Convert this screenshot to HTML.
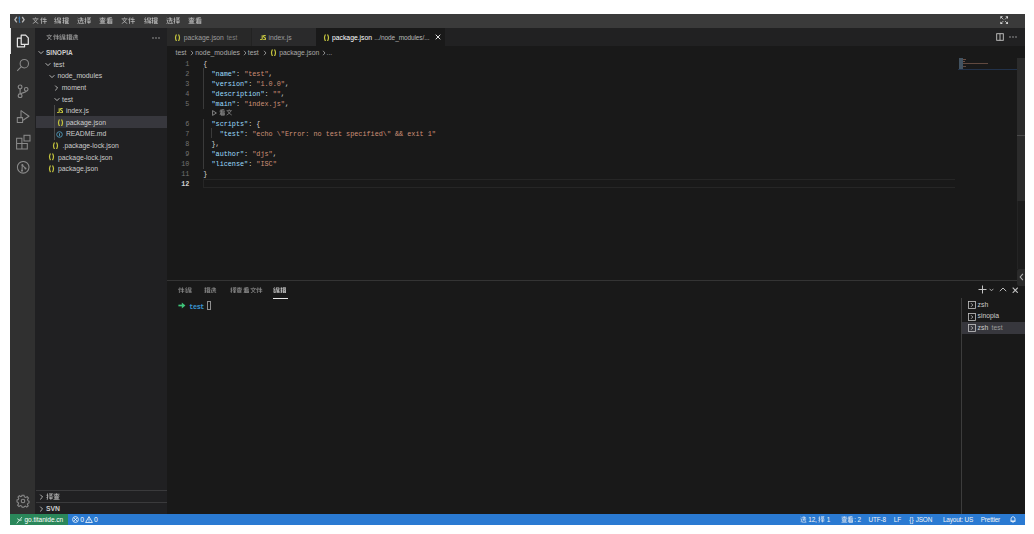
<!DOCTYPE html><html><head><meta charset="utf-8"><style>
*{margin:0;padding:0;box-sizing:border-box}
html,body{width:1034px;height:534px;background:#fff;overflow:hidden}
body{position:relative;font-family:"Liberation Sans",sans-serif;color:#cccccc;font-size:6.8px}
.a{position:absolute}
.t{position:absolute;white-space:nowrap;line-height:8px;height:8px}
.m{font-family:"Liberation Mono",monospace}
#title{left:10px;top:14px;width:1015px;height:14px;background:#3a3a3a}
#act{left:10px;top:28px;width:25.3px;height:486px;background:#303030}
#side{left:35.3px;top:28px;width:131.7px;height:486px;background:#202022}
#tabs{left:167px;top:28px;width:858px;height:18px;background:#212122}
#editor{left:167px;top:46px;width:858px;height:234px;background:#191919}
#panel{left:167px;top:280px;width:858px;height:234px;background:#191919}
#status{left:10px;top:513.6px;width:1015px;height:11.3px;background:#2a7ad2}
#remote{left:10px;top:513.6px;width:57.7px;height:11.3px;background:#2a875a}
svg.cj{display:inline-block;width:1.04em;height:1.04em;vertical-align:-0.16em;margin-right:0.02em;opacity:.9}
.ln{position:absolute;white-space:pre;line-height:10px;height:10px;font-family:"Liberation Mono",monospace;font-size:6.8px}
.k{color:#9cdcfe}.s{color:#ce9178}.p{color:#d4d4d4}
.num{position:absolute;width:24px;text-align:right;line-height:10px;font-family:"Liberation Mono",monospace;font-size:6.8px;color:#858585}
</style></head><body>
<div class="a" id="title"></div>
<div class="a" id="act"></div>
<div class="a" id="side"></div>
<div class="a" id="tabs"></div>
<div class="a" id="editor"></div>
<div class="a" id="panel"></div>
<div class="a" id="status"></div>
<div class="a" id="remote"></div>
<svg class="a" style="left:13.8px;top:16.2px" width="11" height="7.5" viewBox="0 0 11 7.5"><path d="M2.8 1L0.9 3.7L2.8 6.4M8.2 1L10.1 3.7L8.2 6.4" stroke="#b8b8b8" stroke-width="1.35" fill="none"/><path d="M5.4 0.6V5.6Q5.4 6.6 6.3 6.5M4.4 2.3H6.4" stroke="#3a78b0" stroke-width="1.1" fill="none"/></svg>
<div class="t" style="left:32.4px;top:16.6px;color:#cccccc"><svg class="cj" style="" viewBox="0 0 7 7"><path d="M3.5 0.4V1.4M0.6 1.8H6.4M1.8 2.2Q3 5 6.3 6.6M5.2 2.2Q4 5 0.7 6.6" stroke="currentColor" stroke-width="0.72" fill="none"/></svg><svg class="cj" style="" viewBox="0 0 7 7"><path d="M2 0.4L0.5 3.2M1.5 2V6.8M3.2 1L2.8 2.8M3 2.5H6.6M2.6 4.5H6.8M4.8 0.4V6.8" stroke="currentColor" stroke-width="0.72" fill="none"/></svg></div>
<div class="t" style="left:54.4px;top:16.6px;color:#cccccc"><svg class="cj" style="" viewBox="0 0 7 7"><path d="M1.6 0.4L0.6 2.4L2.2 2.6L0.5 4.6L2.4 4.4M0.5 6.2L2.4 5.6M3.2 1H6.6M3.5 1V3H6.4V1M3.2 3.5L3 6.6M4 4H6.5V6.6M4 5.2H6.5M5.2 4V6.6" stroke="currentColor" stroke-width="0.72" fill="none"/></svg><svg class="cj" style="" viewBox="0 0 7 7"><path d="M0.5 1.4H2.5M1.5 0.4V6.6M0.5 3.4H2.5M0.5 5.5L2.5 4.8M3.2 0.8H6.2V2H3.2ZM3 3H6.8M3.6 3V6.6M5.8 3V6.6M3.6 4.5H5.8M3.6 5.5H5.8M2.8 6.6H6.8" stroke="currentColor" stroke-width="0.72" fill="none"/></svg></div>
<div class="t" style="left:76.9px;top:16.6px;color:#cccccc"><svg class="cj" style="" viewBox="0 0 7 7"><path d="M0.6 0.8L1.4 1.6M0.5 3H1.5V5.5L0.5 6.5M1.5 6.2Q3 6.8 6.8 6.5M3.5 0.4L2.6 2M3 1.8H6.4M4.5 0.4V3.2M2.4 3.2H6.6M3.8 3.2Q3.7 5 2.6 5.8M5.2 3.2V5.2Q5.2 5.6 6.4 5.5" stroke="currentColor" stroke-width="0.72" fill="none"/></svg><svg class="cj" style="" viewBox="0 0 7 7"><path d="M0.4 2.2H2.4M1.5 0.4V6.2Q1.5 6.8 0.8 6.6M0.4 4.6L2.4 3.8M3 0.8H6.5L3 3.2M3.5 1.5L6.6 3.2M3 4.2H6.8M4.8 3.4V6.8M3.2 5.4H6.6" stroke="currentColor" stroke-width="0.72" fill="none"/></svg></div>
<div class="t" style="left:99px;top:16.6px;color:#cccccc"><svg class="cj" style="" viewBox="0 0 7 7"><path d="M0.5 1.2H6.5M3.5 0.3V3M3.2 1.5L0.6 3.2M3.8 1.5L6.4 3.2M1.8 3.4H5.2V5.6H1.8ZM1.8 4.5H5.2M0.5 6.6H6.5" stroke="currentColor" stroke-width="0.72" fill="none"/></svg><svg class="cj" style="" viewBox="0 0 7 7"><path d="M5.8 0.3L1.2 1.2M0.8 2H6.2M0.6 3H6.6M3.4 0.8L1 6.6M2.2 4H5.8V6.8H2.2ZM2.2 5H5.8M2.2 5.9H5.8" stroke="currentColor" stroke-width="0.72" fill="none"/></svg></div>
<div class="t" style="left:121.3px;top:16.6px;color:#cccccc"><svg class="cj" style="" viewBox="0 0 7 7"><path d="M3.5 0.4V1.4M0.6 1.8H6.4M1.8 2.2Q3 5 6.3 6.6M5.2 2.2Q4 5 0.7 6.6" stroke="currentColor" stroke-width="0.72" fill="none"/></svg><svg class="cj" style="" viewBox="0 0 7 7"><path d="M2 0.4L0.5 3.2M1.5 2V6.8M3.2 1L2.8 2.8M3 2.5H6.6M2.6 4.5H6.8M4.8 0.4V6.8" stroke="currentColor" stroke-width="0.72" fill="none"/></svg></div>
<div class="t" style="left:143.8px;top:16.6px;color:#cccccc"><svg class="cj" style="" viewBox="0 0 7 7"><path d="M1.6 0.4L0.6 2.4L2.2 2.6L0.5 4.6L2.4 4.4M0.5 6.2L2.4 5.6M3.2 1H6.6M3.5 1V3H6.4V1M3.2 3.5L3 6.6M4 4H6.5V6.6M4 5.2H6.5M5.2 4V6.6" stroke="currentColor" stroke-width="0.72" fill="none"/></svg><svg class="cj" style="" viewBox="0 0 7 7"><path d="M0.5 1.4H2.5M1.5 0.4V6.6M0.5 3.4H2.5M0.5 5.5L2.5 4.8M3.2 0.8H6.2V2H3.2ZM3 3H6.8M3.6 3V6.6M5.8 3V6.6M3.6 4.5H5.8M3.6 5.5H5.8M2.8 6.6H6.8" stroke="currentColor" stroke-width="0.72" fill="none"/></svg></div>
<div class="t" style="left:165.8px;top:16.6px;color:#cccccc"><svg class="cj" style="" viewBox="0 0 7 7"><path d="M0.6 0.8L1.4 1.6M0.5 3H1.5V5.5L0.5 6.5M1.5 6.2Q3 6.8 6.8 6.5M3.5 0.4L2.6 2M3 1.8H6.4M4.5 0.4V3.2M2.4 3.2H6.6M3.8 3.2Q3.7 5 2.6 5.8M5.2 3.2V5.2Q5.2 5.6 6.4 5.5" stroke="currentColor" stroke-width="0.72" fill="none"/></svg><svg class="cj" style="" viewBox="0 0 7 7"><path d="M0.4 2.2H2.4M1.5 0.4V6.2Q1.5 6.8 0.8 6.6M0.4 4.6L2.4 3.8M3 0.8H6.5L3 3.2M3.5 1.5L6.6 3.2M3 4.2H6.8M4.8 3.4V6.8M3.2 5.4H6.6" stroke="currentColor" stroke-width="0.72" fill="none"/></svg></div>
<div class="t" style="left:187.9px;top:16.6px;color:#cccccc"><svg class="cj" style="" viewBox="0 0 7 7"><path d="M0.5 1.2H6.5M3.5 0.3V3M3.2 1.5L0.6 3.2M3.8 1.5L6.4 3.2M1.8 3.4H5.2V5.6H1.8ZM1.8 4.5H5.2M0.5 6.6H6.5" stroke="currentColor" stroke-width="0.72" fill="none"/></svg><svg class="cj" style="" viewBox="0 0 7 7"><path d="M5.8 0.3L1.2 1.2M0.8 2H6.2M0.6 3H6.6M3.4 0.8L1 6.6M2.2 4H5.8V6.8H2.2ZM2.2 5H5.8M2.2 5.9H5.8" stroke="currentColor" stroke-width="0.72" fill="none"/></svg></div>
<div class="num" style="left:165.4px;top:58.7px;color:#737373;">1</div>
<div class="ln" style="left:203.3px;top:58.7px"><span class="p">{</span></div>
<div class="num" style="left:165.4px;top:68.7px;color:#737373;">2</div>
<div class="ln" style="left:203.3px;top:68.7px">  <span class="k">"name"</span><span class="p">: </span><span class="s">"test"</span><span class="p">,</span></div>
<div class="num" style="left:165.4px;top:78.7px;color:#737373;">3</div>
<div class="ln" style="left:203.3px;top:78.7px">  <span class="k">"version"</span><span class="p">: </span><span class="s">"1.0.0"</span><span class="p">,</span></div>
<div class="num" style="left:165.4px;top:88.7px;color:#737373;">4</div>
<div class="ln" style="left:203.3px;top:88.7px">  <span class="k">"description"</span><span class="p">: </span><span class="s">""</span><span class="p">,</span></div>
<div class="num" style="left:165.4px;top:98.7px;color:#737373;">5</div>
<div class="ln" style="left:203.3px;top:98.7px">  <span class="k">"main"</span><span class="p">: </span><span class="s">"index.js"</span><span class="p">,</span></div>
<div class="num" style="left:165.4px;top:118.6px;color:#737373;">6</div>
<div class="ln" style="left:203.3px;top:118.6px">  <span class="k">"scripts"</span><span class="p">: {</span></div>
<div class="num" style="left:165.4px;top:128.6px;color:#737373;">7</div>
<div class="ln" style="left:203.3px;top:128.6px">    <span class="k">"test"</span><span class="p">: </span><span class="s">"echo \"Error: no test specified\" &amp;&amp; exit 1"</span></div>
<div class="num" style="left:165.4px;top:138.6px;color:#737373;">8</div>
<div class="ln" style="left:203.3px;top:138.6px">  <span class="p">},</span></div>
<div class="num" style="left:165.4px;top:148.6px;color:#737373;">9</div>
<div class="ln" style="left:203.3px;top:148.6px">  <span class="k">"author"</span><span class="p">: </span><span class="s">"djs"</span><span class="p">,</span></div>
<div class="num" style="left:165.4px;top:158.6px;color:#737373;">10</div>
<div class="ln" style="left:203.3px;top:158.6px">  <span class="k">"license"</span><span class="p">: </span><span class="s">"ISC"</span></div>
<div class="num" style="left:165.4px;top:168.6px;color:#737373;">11</div>
<div class="ln" style="left:203.3px;top:168.6px"><span class="p">}</span></div>
<div class="num" style="left:165.4px;top:178.6px;color:#d0d0d0;font-weight:bold;">12</div>
<div class="ln" style="left:203.3px;top:178.6px"></div>
<svg class="a" style="left:1000px;top:15.8px" width="8.4" height="8.4" viewBox="0 0 8.4 8.4"><g fill="#d8d8d8"><path d="M0.3 0.3H3L0.3 3Z"/><path d="M8.1 0.3H5.4L8.1 3Z"/><path d="M0.3 8.1H3L0.3 5.4Z"/><path d="M8.1 8.1H5.4L8.1 5.4Z"/></g><g stroke="#d8d8d8" stroke-width="0.75"><path d="M1 1L3.4 3.4M7.4 1L5 3.4M1 7.4L3.4 5M7.4 7.4L5 5"/></g></svg>
<div class="a" style="left:10px;top:28px;width:1.3px;height:25.5px;background:#e8e8e8"></div>
<svg class="a" style="left:16px;top:33.5px" width="14" height="14" viewBox="0 0 14 14"><g stroke="#e6e6e6" stroke-width="1.2" fill="none" stroke-linejoin="round"><path d="M5.2 1.2H9.6L12.3 3.9V10.3H5.2Z"/><path d="M5.2 4.2H1.4V12.8H8.6V10.3"/></g></svg>
<svg class="a" style="left:15.5px;top:58px" width="14" height="14" viewBox="0 0 14 14"><g stroke="#8a8a8a" stroke-width="1.05" fill="none"><circle cx="8.3" cy="5.7" r="4.2"/><path d="M5.3 8.7L1.2 12.8"/></g></svg>
<svg class="a" style="left:15.5px;top:84px" width="14" height="14" viewBox="0 0 14 14"><g stroke="#8a8a8a" stroke-width="1.15" fill="none"><circle cx="4.1" cy="2.9" r="1.9"/><circle cx="4.1" cy="11.7" r="1.9"/><circle cx="10.2" cy="5.3" r="1.8"/><path d="M4.1 4.8V9.8M10.2 7.1C10.2 8.8 6.2 8.4 4.6 9.9"/></g></svg>
<svg class="a" style="left:15.5px;top:108.7px" width="14" height="14" viewBox="0 0 14 14"><g stroke="#8a8a8a" stroke-width="1.05" fill="none" stroke-linejoin="round"><path d="M5 1.6L13 7.2L7 11.2"/><path d="M5 1.6V8"/><rect x="1.3" y="8.6" width="5.3" height="5"/></g></svg>
<svg class="a" style="left:15.5px;top:132px" width="16" height="18" viewBox="0 0 16 18"><g stroke="#8a8a8a" stroke-width="1.05" fill="none"><path d="M0.6 6.2H5.9V11.5H11.3V16.9H0.6ZM0.6 11.5H5.9V16.9"/><rect x="8" y="3.3" width="6" height="5.7"/></g></svg>
<svg class="a" style="left:15.5px;top:160.5px" width="15" height="14" viewBox="0 0 15 14"><g stroke="#8a8a8a" stroke-width="1.05" fill="none"><circle cx="7.2" cy="6.3" r="5.8"/><path d="M6.3 4L6 9.6M6.3 4L9.5 7.4"/></g><g fill="#8a8a8a"><circle cx="6.3" cy="4" r="1"/><circle cx="6" cy="9.8" r="1"/><circle cx="9.5" cy="7.5" r="1"/></g></svg>
<svg class="a" style="left:15.5px;top:494px" width="14" height="14" viewBox="0 0 14 14"><g stroke="#8a8a8a" stroke-width="1.05" fill="none"><circle cx="7" cy="7" r="1.8"/><path d="M6 1.2H8L8.4 2.9L9.8 3.5L11.2 2.6L12.5 4.1L11.5 5.5L12.1 6.9L13 7.1V8.9L11.9 9.3L11.4 10.5L12.2 11.9L10.8 13.1L9.5 12.1L8.2 12.7L7.9 13.2H6.1L5.7 12.1L4.4 11.6L3 12.5L1.6 11.1L2.6 9.7L2.1 8.5L1 8V6L2.3 5.6L2.8 4.4L2 3L3.3 1.7L4.7 2.6L5.8 2.1Z"/></g></svg>
<div class="t" style="left:46px;top:33.5px;font-size:6.2px;color:#bbbbbb"><svg class="cj" style="" viewBox="0 0 7 7"><path d="M3.5 0.4V1.4M0.6 1.8H6.4M1.8 2.2Q3 5 6.3 6.6M5.2 2.2Q4 5 0.7 6.6" stroke="currentColor" stroke-width="0.72" fill="none"/></svg><svg class="cj" style="" viewBox="0 0 7 7"><path d="M2 0.4L0.5 3.2M1.5 2V6.8M3.2 1L2.8 2.8M3 2.5H6.6M2.6 4.5H6.8M4.8 0.4V6.8" stroke="currentColor" stroke-width="0.72" fill="none"/></svg><svg class="cj" style="" viewBox="0 0 7 7"><path d="M1.6 0.4L0.6 2.4L2.2 2.6L0.5 4.6L2.4 4.4M0.5 6.2L2.4 5.6M3.2 1H6.6M3.5 1V3H6.4V1M3.2 3.5L3 6.6M4 4H6.5V6.6M4 5.2H6.5M5.2 4V6.6" stroke="currentColor" stroke-width="0.72" fill="none"/></svg><svg class="cj" style="" viewBox="0 0 7 7"><path d="M0.5 1.4H2.5M1.5 0.4V6.6M0.5 3.4H2.5M0.5 5.5L2.5 4.8M3.2 0.8H6.2V2H3.2ZM3 3H6.8M3.6 3V6.6M5.8 3V6.6M3.6 4.5H5.8M3.6 5.5H5.8M2.8 6.6H6.8" stroke="currentColor" stroke-width="0.72" fill="none"/></svg><svg class="cj" style="" viewBox="0 0 7 7"><path d="M0.6 0.8L1.4 1.6M0.5 3H1.5V5.5L0.5 6.5M1.5 6.2Q3 6.8 6.8 6.5M3.5 0.4L2.6 2M3 1.8H6.4M4.5 0.4V3.2M2.4 3.2H6.6M3.8 3.2Q3.7 5 2.6 5.8M5.2 3.2V5.2Q5.2 5.6 6.4 5.5" stroke="currentColor" stroke-width="0.72" fill="none"/></svg></div>
<svg class="a" style="left:151.5px;top:36.5px" width="8" height="2" viewBox="0 0 8 2"><g fill="#c0c0c0"><circle cx="1" cy="1" r="0.65"/><circle cx="4" cy="1" r="0.65"/><circle cx="7" cy="1" r="0.65"/></g></svg>
<div class="a" style="left:35.5px;top:116.10px;width:131.5px;height:11.6px;background:#37373d"></div>
<div class="a" style="left:54px;top:105.00px;width:0.9px;height:34.80px;background:#4a4a4a"></div>
<svg class="a" style="left:37.8px;top:50.30px" width="6" height="5" viewBox="0 0 6 5"><path d="M0.6 1.2L3 3.6L5.4 1.2" stroke="#c5c5c5" stroke-width="0.9" fill="none"/></svg>
<div class="t" style="left:46px;top:49.10px;font-weight:bold;font-size:6.5px;color:#cccccc">SINOPIA</div>
<svg class="a" style="left:44.6px;top:61.90px" width="6" height="5" viewBox="0 0 6 5"><path d="M0.6 1.2L3 3.6L5.4 1.2" stroke="#c5c5c5" stroke-width="0.9" fill="none"/></svg>
<div class="t" style="left:53.4px;top:60.70px;font-weight:normal;color:#cccccc">test</div>
<svg class="a" style="left:49.0px;top:73.50px" width="6" height="5" viewBox="0 0 6 5"><path d="M0.6 1.2L3 3.6L5.4 1.2" stroke="#c5c5c5" stroke-width="0.9" fill="none"/></svg>
<div class="t" style="left:57.5px;top:72.30px;font-weight:normal;color:#cccccc">node_modules</div>
<svg class="a" style="left:54.2px;top:84.60px" width="5" height="6" viewBox="0 0 5 6"><path d="M1.2 0.6L3.6 3L1.2 5.4" stroke="#c5c5c5" stroke-width="0.9" fill="none"/></svg>
<div class="t" style="left:61.7px;top:83.90px;font-weight:normal;color:#cccccc">moment</div>
<svg class="a" style="left:53.8px;top:96.70px" width="6" height="5" viewBox="0 0 6 5"><path d="M0.6 1.2L3 3.6L5.4 1.2" stroke="#c5c5c5" stroke-width="0.9" fill="none"/></svg>
<div class="t" style="left:62px;top:95.50px;font-weight:normal;color:#cccccc">test</div>
<svg class="a" style="left:56.9px;top:108.10px" width="6.2" height="5.4" viewBox="0 0 6.5 6" preserveAspectRatio="none"><path d="M0.3 4.6Q0.6 5.3 1.4 5.3Q2.3 5.3 2.3 4.2V0.4M5.9 0.9Q5.4 0.4 4.7 0.4Q3.7 0.4 3.7 1.4Q3.7 2.2 4.7 2.7Q5.9 3.2 5.9 4.2Q5.9 5.3 4.7 5.3Q3.9 5.3 3.4 4.8" stroke="#cbcb41" stroke-width="1.15" fill="none"/></svg>
<div class="t" style="left:65.9px;top:107.10px;font-weight:normal;color:#cccccc">index.js</div>
<svg class="a" style="left:56.6px;top:118.60px" width="7" height="7.6" viewBox="0 0 7 7.6"><path d="M2.5 0.5Q0.5 3.8 2.5 7.1M4.5 0.5Q6.5 3.8 4.5 7.1" stroke="#c4c43e" stroke-width="1.2" fill="none"/></svg>
<div class="t" style="left:65.9px;top:118.70px;font-weight:normal;color:#cccccc">package.json</div>
<svg class="a" style="left:56.3px;top:130.70px" width="7" height="7" viewBox="0 0 7 7"><circle cx="3.5" cy="3.5" r="2.8" stroke="#519aba" stroke-width="0.9" fill="none"/><path d="M3.5 2.2V5.2" stroke="#519aba" stroke-width="0.9"/></svg>
<div class="t" style="left:65.9px;top:130.30px;font-weight:normal;color:#cccccc">README.md</div>
<svg class="a" style="left:52.2px;top:141.80px" width="7" height="7.6" viewBox="0 0 7 7.6"><path d="M2.5 0.5Q0.5 3.8 2.5 7.1M4.5 0.5Q6.5 3.8 4.5 7.1" stroke="#c4c43e" stroke-width="1.2" fill="none"/></svg>
<div class="t" style="left:62.5px;top:141.90px;font-weight:normal;color:#cccccc">.package-lock.json</div>
<svg class="a" style="left:47.6px;top:153.40px" width="7" height="7.6" viewBox="0 0 7 7.6"><path d="M2.5 0.5Q0.5 3.8 2.5 7.1M4.5 0.5Q6.5 3.8 4.5 7.1" stroke="#c4c43e" stroke-width="1.2" fill="none"/></svg>
<div class="t" style="left:58px;top:153.50px;font-weight:normal;color:#cccccc">package-lock.json</div>
<svg class="a" style="left:47.6px;top:165.00px" width="7" height="7.6" viewBox="0 0 7 7.6"><path d="M2.5 0.5Q0.5 3.8 2.5 7.1M4.5 0.5Q6.5 3.8 4.5 7.1" stroke="#c4c43e" stroke-width="1.2" fill="none"/></svg>
<div class="t" style="left:58px;top:165.10px;font-weight:normal;color:#cccccc">package.json</div>
<div class="a" style="left:35.5px;top:490px;width:131.5px;height:0.8px;background:#3a3a3c"></div>
<div class="a" style="left:35.5px;top:502px;width:131.5px;height:0.8px;background:#3a3a3c"></div>
<svg class="a" style="left:38.5px;top:494.30px" width="5" height="6" viewBox="0 0 5 6"><path d="M1.2 0.6L3.6 3L1.2 5.4" stroke="#c5c5c5" stroke-width="0.9" fill="none"/></svg>
<div class="t" style="left:46px;top:493.30px;font-weight:bold;color:#cccccc"><svg class="cj" style="" viewBox="0 0 7 7"><path d="M0.4 2.2H2.4M1.5 0.4V6.2Q1.5 6.8 0.8 6.6M0.4 4.6L2.4 3.8M3 0.8H6.5L3 3.2M3.5 1.5L6.6 3.2M3 4.2H6.8M4.8 3.4V6.8M3.2 5.4H6.6" stroke="currentColor" stroke-width="0.72" fill="none"/></svg><svg class="cj" style="" viewBox="0 0 7 7"><path d="M0.5 1.2H6.5M3.5 0.3V3M3.2 1.5L0.6 3.2M3.8 1.5L6.4 3.2M1.8 3.4H5.2V5.6H1.8ZM1.8 4.5H5.2M0.5 6.6H6.5" stroke="currentColor" stroke-width="0.72" fill="none"/></svg></div>
<svg class="a" style="left:38.5px;top:505.60px" width="5" height="6" viewBox="0 0 5 6"><path d="M1.2 0.6L3.6 3L1.2 5.4" stroke="#c5c5c5" stroke-width="0.9" fill="none"/></svg>
<div class="t" style="left:46px;top:504.60px;font-weight:bold;color:#cccccc">SVN</div>
<div class="a" style="left:167px;top:28px;width:84px;height:18px;background:#282828"></div>
<div class="a" style="left:251.5px;top:28px;width:64px;height:18px;background:#2a2a2b"></div>
<div class="a" style="left:251px;top:28px;width:0.9px;height:18px;background:#222"></div>
<div class="a" style="left:315.5px;top:28px;width:129.2px;height:18px;background:#191919"></div>
<svg class="a" style="left:174px;top:33.80px" width="7" height="7.6" viewBox="0 0 7 7.6"><path d="M2.5 0.5Q0.5 3.8 2.5 7.1M4.5 0.5Q6.5 3.8 4.5 7.1" stroke="#c4c43e" stroke-width="1.2" fill="none"/></svg>
<div class="t" style="left:183.8px;top:33.6px;color:#9d9d9d">package.json <span style="font-size:6.5px;color:#7f7f7f;margin-left:1px">test</span></div>
<svg class="a" style="left:260px;top:34.90px" width="6.2" height="5.4" viewBox="0 0 6.5 6" preserveAspectRatio="none"><path d="M0.3 4.6Q0.6 5.3 1.4 5.3Q2.3 5.3 2.3 4.2V0.4M5.9 0.9Q5.4 0.4 4.7 0.4Q3.7 0.4 3.7 1.4Q3.7 2.2 4.7 2.7Q5.9 3.2 5.9 4.2Q5.9 5.3 4.7 5.3Q3.9 5.3 3.4 4.8" stroke="#cbcb41" stroke-width="1.15" fill="none"/></svg>
<div class="t" style="left:268.5px;top:33.6px;color:#9d9d9d">index.js</div>
<svg class="a" style="left:322.5px;top:33.80px" width="7" height="7.6" viewBox="0 0 7 7.6"><path d="M2.5 0.5Q0.5 3.8 2.5 7.1M4.5 0.5Q6.5 3.8 4.5 7.1" stroke="#c4c43e" stroke-width="1.2" fill="none"/></svg>
<div class="t" style="left:332px;top:33.6px;color:#ffffff">package.json <span style="font-size:6.5px;letter-spacing:-0.1px;color:#b8b8b8;margin-left:0.3px">.../node_modules/...</span></div>
<svg class="a" style="left:434.5px;top:34px" width="6" height="6" viewBox="0 0 6 6"><path d="M0.7 0.7L5.3 5.3M5.3 0.7L0.7 5.3" stroke="#e0e0e0" stroke-width="1"/></svg>
<svg class="a" style="left:995.5px;top:33px" width="8" height="8" viewBox="0 0 8 8"><g stroke="#c5c5c5" stroke-width="0.9" fill="none"><rect x="0.7" y="0.7" width="6.6" height="6.6"/><path d="M4 0.7V7.3"/></g></svg>
<svg class="a" style="left:1009px;top:36px" width="8" height="2" viewBox="0 0 8 2"><g fill="#c0c0c0"><circle cx="1" cy="1" r="0.65"/><circle cx="4" cy="1" r="0.65"/><circle cx="7" cy="1" r="0.65"/></g></svg>
<div class="t" style="left:175.5px;top:48.6px;color:#a9a9a9">test</div>
<svg class="a" style="left:190.2px;top:49.6px" width="4" height="6" viewBox="0 0 4 6"><path d="M1 0.8L3 3L1 5.2" stroke="#a9a9a9" stroke-width="0.8" fill="none"/></svg>
<div class="t" style="left:195.3px;top:48.6px;color:#a9a9a9">node_modules</div>
<svg class="a" style="left:242.8px;top:49.6px" width="4" height="6" viewBox="0 0 4 6"><path d="M1 0.8L3 3L1 5.2" stroke="#a9a9a9" stroke-width="0.8" fill="none"/></svg>
<div class="t" style="left:247.8px;top:48.6px;color:#a9a9a9">test</div>
<svg class="a" style="left:262.5px;top:49.6px" width="4" height="6" viewBox="0 0 4 6"><path d="M1 0.8L3 3L1 5.2" stroke="#a9a9a9" stroke-width="0.8" fill="none"/></svg>
<svg class="a" style="left:269.5px;top:48.80px" width="7" height="7.6" viewBox="0 0 7 7.6"><path d="M2.5 0.5Q0.5 3.8 2.5 7.1M4.5 0.5Q6.5 3.8 4.5 7.1" stroke="#c4c43e" stroke-width="1.2" fill="none"/></svg>
<div class="t" style="left:279.2px;top:48.6px;color:#a9a9a9">package.json</div>
<svg class="a" style="left:321.7px;top:49.6px" width="4" height="6" viewBox="0 0 4 6"><path d="M1 0.8L3 3L1 5.2" stroke="#a9a9a9" stroke-width="0.8" fill="none"/></svg>
<div class="t" style="left:326.5px;top:48.6px;color:#a9a9a9">...</div>
<div class="a" style="left:203.1px;top:68.2px;width:0.8px;height:40.6px;background:#3a3a3a"></div>
<div class="a" style="left:203.1px;top:118.6px;width:0.8px;height:50px;background:#3a3a3a"></div>
<div class="a" style="left:211.3px;top:128.4px;width:0.8px;height:10px;background:#3a3a3a"></div>
<svg class="a" style="left:212px;top:110.3px" width="5" height="6" viewBox="0 0 5 6"><path d="M0.6 0.6L4.4 3L0.6 5.4Z" stroke="#9a9a9a" stroke-width="0.8" fill="none" stroke-linejoin="round"/></svg>
<div class="t" style="left:219px;top:108.6px;font-size:6.2px;color:#a0a0a0"><svg class="cj" style="" viewBox="0 0 7 7"><path d="M5.8 0.3L1.2 1.2M0.8 2H6.2M0.6 3H6.6M3.4 0.8L1 6.6M2.2 4H5.8V6.8H2.2ZM2.2 5H5.8M2.2 5.9H5.8" stroke="currentColor" stroke-width="0.72" fill="none"/></svg><svg class="cj" style="" viewBox="0 0 7 7"><path d="M3.5 0.4V1.4M0.6 1.8H6.4M1.8 2.2Q3 5 6.3 6.6M5.2 2.2Q4 5 0.7 6.6" stroke="currentColor" stroke-width="0.72" fill="none"/></svg></div>
<div class="a" style="left:203px;top:178.7px;width:751.5px;height:9.8px;border:0.9px solid #262626;border-right:none"></div>
<div class="a" style="left:958.5px;top:58px;width:4.5px;height:10.5px;background:#5d7890;opacity:.6"></div>
<div class="a" style="left:963px;top:59px;width:3px;height:0.8px;background:#ce9178;opacity:.45"></div>
<div class="a" style="left:963px;top:61px;width:2px;height:0.8px;background:#ce9178;opacity:.45"></div>
<div class="a" style="left:963px;top:63.3px;width:25px;height:0.9px;background:#ce9178;opacity:.4"></div>
<div class="a" style="left:963px;top:65.5px;width:2.5px;height:0.8px;background:#ce9178;opacity:.4"></div>
<div class="a" style="left:958px;top:69.2px;width:59px;height:1.3px;background:#22324a"></div>
<div class="a" style="left:1017.3px;top:57.7px;width:7.7px;height:143.7px;background:#2b2b2b"></div>
<div class="a" style="left:1017.3px;top:201.4px;width:7.7px;height:78px;background:#1c1c1c"></div>
<div class="a" style="left:1017.3px;top:134.8px;width:7.7px;height:1px;background:#4a4a4a"></div>
<div class="a" style="left:1017.1px;top:201.4px;width:0.8px;height:67.5px;background:#242424"></div>
<div class="a" style="left:167px;top:279.8px;width:850px;height:0.9px;background:#343434"></div>
<div class="a" style="left:1016.8px;top:268.9px;width:8.2px;height:16.8px;background:#2a2a2a;border-radius:2.5px 0 0 2.5px"></div>
<svg class="a" style="left:1018.6px;top:273.3px" width="5" height="8" viewBox="0 0 5 8"><path d="M3.9 0.9L1.2 4L3.9 7.1" stroke="#b0b0b0" stroke-width="1.1" fill="none"/></svg>
<div class="t" style="left:178.4px;top:286.3px;font-size:6.3px;color:#9a9a9a"><svg class="cj" style="" viewBox="0 0 7 7"><path d="M2 0.4L0.5 3.2M1.5 2V6.8M3.2 1L2.8 2.8M3 2.5H6.6M2.6 4.5H6.8M4.8 0.4V6.8" stroke="currentColor" stroke-width="0.8" fill="none"/></svg><svg class="cj" style="" viewBox="0 0 7 7"><path d="M1.6 0.4L0.6 2.4L2.2 2.6L0.5 4.6L2.4 4.4M0.5 6.2L2.4 5.6M3.2 1H6.6M3.5 1V3H6.4V1M3.2 3.5L3 6.6M4 4H6.5V6.6M4 5.2H6.5M5.2 4V6.6" stroke="currentColor" stroke-width="0.8" fill="none"/></svg></div>
<div class="t" style="left:203.5px;top:286.3px;font-size:6.3px;color:#9a9a9a"><svg class="cj" style="" viewBox="0 0 7 7"><path d="M0.5 1.4H2.5M1.5 0.4V6.6M0.5 3.4H2.5M0.5 5.5L2.5 4.8M3.2 0.8H6.2V2H3.2ZM3 3H6.8M3.6 3V6.6M5.8 3V6.6M3.6 4.5H5.8M3.6 5.5H5.8M2.8 6.6H6.8" stroke="currentColor" stroke-width="0.8" fill="none"/></svg><svg class="cj" style="" viewBox="0 0 7 7"><path d="M0.6 0.8L1.4 1.6M0.5 3H1.5V5.5L0.5 6.5M1.5 6.2Q3 6.8 6.8 6.5M3.5 0.4L2.6 2M3 1.8H6.4M4.5 0.4V3.2M2.4 3.2H6.6M3.8 3.2Q3.7 5 2.6 5.8M5.2 3.2V5.2Q5.2 5.6 6.4 5.5" stroke="currentColor" stroke-width="0.8" fill="none"/></svg></div>
<div class="t" style="left:229.6px;top:286.3px;font-size:6.3px;color:#9a9a9a"><svg class="cj" style="" viewBox="0 0 7 7"><path d="M0.4 2.2H2.4M1.5 0.4V6.2Q1.5 6.8 0.8 6.6M0.4 4.6L2.4 3.8M3 0.8H6.5L3 3.2M3.5 1.5L6.6 3.2M3 4.2H6.8M4.8 3.4V6.8M3.2 5.4H6.6" stroke="currentColor" stroke-width="0.8" fill="none"/></svg><svg class="cj" style="" viewBox="0 0 7 7"><path d="M0.5 1.2H6.5M3.5 0.3V3M3.2 1.5L0.6 3.2M3.8 1.5L6.4 3.2M1.8 3.4H5.2V5.6H1.8ZM1.8 4.5H5.2M0.5 6.6H6.5" stroke="currentColor" stroke-width="0.8" fill="none"/></svg><svg class="cj" style="" viewBox="0 0 7 7"><path d="M5.8 0.3L1.2 1.2M0.8 2H6.2M0.6 3H6.6M3.4 0.8L1 6.6M2.2 4H5.8V6.8H2.2ZM2.2 5H5.8M2.2 5.9H5.8" stroke="currentColor" stroke-width="0.8" fill="none"/></svg><svg class="cj" style="" viewBox="0 0 7 7"><path d="M3.5 0.4V1.4M0.6 1.8H6.4M1.8 2.2Q3 5 6.3 6.6M5.2 2.2Q4 5 0.7 6.6" stroke="currentColor" stroke-width="0.8" fill="none"/></svg><svg class="cj" style="" viewBox="0 0 7 7"><path d="M2 0.4L0.5 3.2M1.5 2V6.8M3.2 1L2.8 2.8M3 2.5H6.6M2.6 4.5H6.8M4.8 0.4V6.8" stroke="currentColor" stroke-width="0.8" fill="none"/></svg></div>
<div class="t" style="left:273px;top:286.3px;font-size:6.3px;color:#e7e7e7"><svg class="cj" style="" viewBox="0 0 7 7"><path d="M1.6 0.4L0.6 2.4L2.2 2.6L0.5 4.6L2.4 4.4M0.5 6.2L2.4 5.6M3.2 1H6.6M3.5 1V3H6.4V1M3.2 3.5L3 6.6M4 4H6.5V6.6M4 5.2H6.5M5.2 4V6.6" stroke="currentColor" stroke-width="0.8" fill="none"/></svg><svg class="cj" style="" viewBox="0 0 7 7"><path d="M0.5 1.4H2.5M1.5 0.4V6.6M0.5 3.4H2.5M0.5 5.5L2.5 4.8M3.2 0.8H6.2V2H3.2ZM3 3H6.8M3.6 3V6.6M5.8 3V6.6M3.6 4.5H5.8M3.6 5.5H5.8M2.8 6.6H6.8" stroke="currentColor" stroke-width="0.8" fill="none"/></svg></div>
<div class="a" style="left:273px;top:298px;width:15px;height:0.9px;background:#e7e7e7"></div>
<svg class="a" style="left:977.5px;top:285px" width="9" height="9" viewBox="0 0 9 9"><path d="M4.5 0.5V8.5M0.5 4.5H8.5" stroke="#c5c5c5" stroke-width="1"/></svg>
<svg class="a" style="left:988.5px;top:288px" width="5" height="4" viewBox="0 0 5 4"><path d="M0.6 0.8L2.5 2.8L4.4 0.8" stroke="#c5c5c5" stroke-width="0.8" fill="none"/></svg>
<svg class="a" style="left:999px;top:286.5px" width="8" height="5" viewBox="0 0 8 5"><path d="M0.8 4.2L4 1L7.2 4.2" stroke="#c5c5c5" stroke-width="0.95" fill="none"/></svg>
<svg class="a" style="left:1011.8px;top:286.6px" width="6.5" height="6.5" viewBox="0 0 6.5 6.5"><path d="M0.7 0.7L5.8 5.8M5.8 0.7L0.7 5.8" stroke="#c5c5c5" stroke-width="1.1"/></svg>
<svg class="a" style="left:177.8px;top:302.3px" width="8" height="7" viewBox="0 0 8 7"><path d="M0.4 3.5H4.6" stroke="#3fc57a" stroke-width="1.7"/><path d="M3.8 0.6L7.4 3.5L3.8 6.4Z" fill="#3fc57a"/></svg>
<div class="t m" style="left:189.2px;top:302.6px;font-size:6.8px;font-weight:bold;color:#3a96d2;letter-spacing:-0.35px">test</div>
<div class="a" style="left:207px;top:300.6px;width:4.2px;height:9.3px;border:0.85px solid #8e8e8e"></div>
<div class="a" style="left:961.2px;top:298.3px;width:0.8px;height:215.7px;background:#3c3c3c"></div>
<div class="a" style="left:962px;top:322.2px;width:63px;height:11.6px;background:#37373d"></div>
<svg class="a" style="left:967.5px;top:301.00px" width="8" height="8" viewBox="0 0 8 8"><g stroke="#c5c5c5" stroke-width="0.8" fill="none"><rect x="0.5" y="0.5" width="7" height="7"/><path d="M3 2.2L4.8 4L3 5.8"/></g></svg>
<div class="t" style="left:977.6px;top:300.90px;color:#cccccc">zsh</div>
<svg class="a" style="left:967.5px;top:312.50px" width="8" height="8" viewBox="0 0 8 8"><g stroke="#c5c5c5" stroke-width="0.8" fill="none"><rect x="0.5" y="0.5" width="7" height="7"/><path d="M3 2.2L4.8 4L3 5.8"/></g></svg>
<div class="t" style="left:977.6px;top:312.40px;color:#cccccc">sinopia</div>
<svg class="a" style="left:967.5px;top:324.10px" width="8" height="8" viewBox="0 0 8 8"><g stroke="#c5c5c5" stroke-width="0.8" fill="none"><rect x="0.5" y="0.5" width="7" height="7"/><path d="M3 2.2L4.8 4L3 5.8"/></g></svg>
<div class="t" style="left:977.6px;top:324.00px;color:#cccccc">zsh <span style="color:#9a9a9a;margin-left:1.5px">test</span></div>
<svg class="a" style="left:15.5px;top:515.5px" width="7" height="8" viewBox="0 0 7 8"><path d="M0.8 7.4L6 1M1.2 2.6L3.4 4.3L5.8 4" stroke="#d8eee4" stroke-width="0.85" fill="none"/></svg>
<div class="t" style="left:24.5px;top:515.6px;font-size:6.5px;color:#ffffff">go.titanide.cn</div>
<svg class="a" style="left:72px;top:516px" width="7" height="7" viewBox="0 0 7 7"><g stroke="#fff" stroke-width="0.8" fill="none"><circle cx="3.5" cy="3.5" r="2.9"/><path d="M2.1 2.1L4.9 4.9M4.9 2.1L2.1 4.9"/></g></svg>
<div class="t" style="left:80.2px;top:515.6px;color:#ffffff">0</div>
<svg class="a" style="left:85px;top:515.8px" width="8" height="7" viewBox="0 0 8 7"><g stroke="#fff" stroke-width="0.8" fill="none" stroke-linejoin="round"><path d="M4 0.6L7.4 6.5H0.6Z"/><path d="M4 2.6V4.6M4 5.2V5.8"/></g></svg>
<div class="t" style="left:94px;top:515.6px;color:#ffffff">0</div>
<div class="t" style="left:799.9px;top:515.6px;font-size:6.4px;letter-spacing:-0.15px;color:#f4f4f4"><svg class="cj" style="" viewBox="0 0 7 7"><path d="M0.6 0.8L1.4 1.6M0.5 3H1.5V5.5L0.5 6.5M1.5 6.2Q3 6.8 6.8 6.5M3.5 0.4L2.6 2M3 1.8H6.4M4.5 0.4V3.2M2.4 3.2H6.6M3.8 3.2Q3.7 5 2.6 5.8M5.2 3.2V5.2Q5.2 5.6 6.4 5.5" stroke="currentColor" stroke-width="0.72" fill="none"/></svg> 12, <svg class="cj" style="" viewBox="0 0 7 7"><path d="M0.4 2.2H2.4M1.5 0.4V6.2Q1.5 6.8 0.8 6.6M0.4 4.6L2.4 3.8M3 0.8H6.5L3 3.2M3.5 1.5L6.6 3.2M3 4.2H6.8M4.8 3.4V6.8M3.2 5.4H6.6" stroke="currentColor" stroke-width="0.72" fill="none"/></svg> 1</div>
<div class="t" style="left:840.7px;top:515.6px;font-size:6.4px;letter-spacing:-0.15px;color:#f4f4f4"><svg class="cj" style="" viewBox="0 0 7 7"><path d="M0.5 1.2H6.5M3.5 0.3V3M3.2 1.5L0.6 3.2M3.8 1.5L6.4 3.2M1.8 3.4H5.2V5.6H1.8ZM1.8 4.5H5.2M0.5 6.6H6.5" stroke="currentColor" stroke-width="0.72" fill="none"/></svg><svg class="cj" style="" viewBox="0 0 7 7"><path d="M5.8 0.3L1.2 1.2M0.8 2H6.2M0.6 3H6.6M3.4 0.8L1 6.6M2.2 4H5.8V6.8H2.2ZM2.2 5H5.8M2.2 5.9H5.8" stroke="currentColor" stroke-width="0.72" fill="none"/></svg>: 2</div>
<div class="t" style="left:868.6px;top:515.6px;font-size:6.4px;letter-spacing:-0.15px;color:#f4f4f4">UTF-8</div>
<div class="t" style="left:893.8px;top:515.6px;font-size:6.4px;letter-spacing:-0.15px;color:#f4f4f4">LF</div>
<div class="t" style="left:909.2px;top:515.6px;font-size:6.4px;letter-spacing:-0.15px;color:#f4f4f4"><span style="letter-spacing:0.3px">{}</span> JSON</div>
<div class="t" style="left:942.9px;top:515.6px;font-size:6.4px;letter-spacing:-0.15px;color:#f4f4f4">Layout: US</div>
<div class="t" style="left:980.7px;top:515.6px;font-size:6.4px;letter-spacing:-0.15px;color:#f4f4f4">Prettier</div>
<svg class="a" style="left:1010.3px;top:515.8px" width="6" height="7" viewBox="0 0 6 7"><g stroke="#fff" stroke-width="0.8" fill="none"><path d="M1 5.2V3C1 1.6 1.9 0.8 3 0.8S5 1.6 5 3V5.2ZM0.5 5.2H5.5M2.3 6.2H3.7"/></g></svg>
</body></html>
